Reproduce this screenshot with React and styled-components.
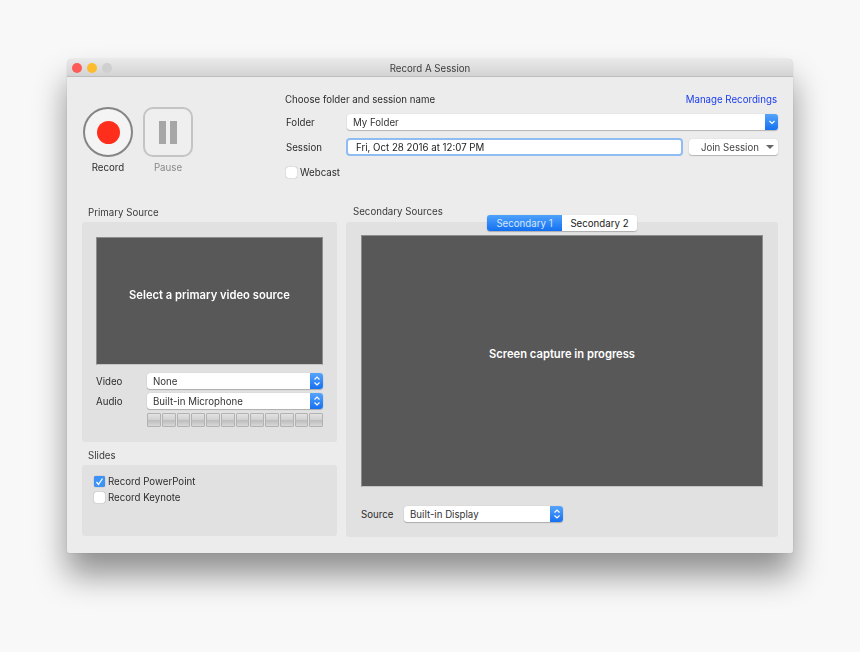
import React from 'react';
import styled, { createGlobalStyle } from 'styled-components';

const GlobalStyle = createGlobalStyle`
  html, body {
    margin: 0;
    padding: 0;
    background: #f8f8f8;
  }
  body {
    font-family: Inter, "Liberation Sans", sans-serif;
    font-size: 9.7px;
    color: #2c2c2c;
  }
  * { box-sizing: border-box; }
`;

const Page = styled.div`
  width: 860px;
  height: 652px;
  padding: 59px 67px;
  overflow: hidden;
`;

const Window = styled.div`
  width: 726px;
  height: 494px;
  background: #ececec;
  border-radius: 5px 5px 2px 2px;
  box-shadow: 0 0 1px rgba(0, 0, 0, 0.35), 0 22px 32px rgba(0, 0, 0, 0.42);
  display: flex;
  flex-direction: column;
  filter: blur(0.3px);
`;

const TitleBar = styled.div`
  height: 18px;
  padding-top: 2px;
  position: relative;
  flex: none;
  background: linear-gradient(#e9e9e9, #d3d3d3);
  border-bottom: 1px solid #bdbdbd;
  border-radius: 5px 5px 0 0;
  display: flex;
  align-items: center;
  justify-content: center;
  color: #3c3c3c;
`;

const Lights = styled.div`
  position: absolute;
  left: 5px;
  top: 4px;
  display: flex;
  gap: 5px;
`;

const Light = styled.span`
  width: 10px;
  height: 10px;
  border-radius: 50%;
  background: ${(p) => p.$color};
`;

const Body = styled.div`
  flex: 1;
  display: flex;
  flex-direction: column;
  padding: 0 15px 16px;
`;

const TopArea = styled.div`
  height: 125px;
  display: flex;
`;

const Transport = styled.div`
  width: 203px;
  padding: 30px 0 0 1px;
  display: flex;
  gap: 10px;
`;

const TransportItem = styled.div`
  width: 50px;
  display: flex;
  flex-direction: column;
  align-items: center;
  gap: 5px;
  color: ${(p) => (p.$disabled ? '#8a8a8a' : '#2c2c2c')};
`;

const RecordButton = styled.div`
  width: 50px;
  height: 50px;
  border-radius: 50%;
  border: 2px solid #858585;
  background: #f4f4f4;
  display: flex;
  align-items: center;
  justify-content: center;
`;

const RecordDot = styled.span`
  width: 23px;
  height: 23px;
  border-radius: 50%;
  background: #ff2d1c;
`;

const PauseButton = styled.div`
  width: 50px;
  height: 50px;
  border-radius: 10px;
  border: 2px solid #c4c4c4;
  background: #efefef;
  display: flex;
  align-items: center;
  justify-content: center;
  gap: 4px;
`;

const PauseBar = styled.span`
  width: 7px;
  height: 23px;
  background: #a6a6a6;
`;

const Form = styled.div`
  flex: 1;
  padding-top: 15px;
  display: flex;
  flex-direction: column;
`;

const FormHead = styled.div`
  height: 14px;
  margin-bottom: 8px;
  display: flex;
  justify-content: space-between;
  align-items: center;
`;

const ManageLink = styled.a`
  color: #1a3cf0;
  padding-right: 1px;
`;

const FormRow = styled.div`
  display: flex;
  align-items: center;
  height: 16px;
  margin-bottom: 9px;
`;

const RowLabel = styled.span`
  width: ${(p) => p.$width}px;
  flex: none;
  padding-left: ${(p) => p.$indent || 0}px;
`;

const SelectBox = styled.div`
  width: ${(p) => (p.$width ? `${p.$width}px` : 'auto')};
  flex: ${(p) => (p.$width ? 'none' : 1)};
  height: 16px;
  background: #fff;
  border-radius: 3px;
  box-shadow: 0 1px 1px rgba(0, 0, 0, 0.22), 0 0 1px rgba(0, 0, 0, 0.2);
  display: flex;
  justify-content: space-between;
  align-items: center;
  padding-left: 6px;
  overflow: hidden;
  color: #333;
`;

const SelectArrow = styled.span`
  width: 13px;
  height: 16px;
  background: linear-gradient(#56a5fc, #1670f0);
  display: flex;
  align-items: center;
  justify-content: center;
`;

const SessionInput = styled.div`
  width: 333px;
  height: 14px;
  flex: none;
  margin: 0 1px;
  background: #fff;
  border-radius: 2px;
  box-shadow: 0 0 0 2px #8fbdf3;
  display: flex;
  align-items: center;
  padding-left: 8px;
  color: #222;
`;

const JoinButton = styled.div`
  width: 89px;
  height: 16px;
  margin-left: 7px;
  flex: none;
  background: #fff;
  border-radius: 3px;
  box-shadow: 0 1px 1px rgba(0, 0, 0, 0.22), 0 0 1px rgba(0, 0, 0, 0.2);
  display: flex;
  align-items: center;
  justify-content: flex-end;
  gap: 7px;
  padding-right: 4px;
  color: #444;
`;

const Caret = styled.span`
  width: 0;
  height: 0;
  border-left: 4px solid transparent;
  border-right: 4px solid transparent;
  border-top: 4px solid #666;
`;

const CheckRow = styled.div`
  display: flex;
  align-items: center;
  gap: 3px;
  height: 12px;
  margin-left: ${(p) => p.$indent || 0}px;
  margin-top: ${(p) => p.$top || 0}px;
  margin-bottom: ${(p) => p.$gap || 0}px;
`;

const CheckBox = styled.span`
  width: 11px;
  height: 11px;
  border-radius: 2px;
  background: ${(p) => (p.$checked ? '#3d92f8' : '#fff')};
  box-shadow: 0 0 1px rgba(0, 0, 0, 0.5);
  display: flex;
  align-items: center;
  justify-content: center;
`;

const Sources = styled.div`
  flex: 1;
  display: grid;
  grid-template-columns: 255px 432px;
  gap: 9px;
`;

const Column = styled.div`
  display: flex;
  flex-direction: column;
`;

const SectionLabel = styled.div`
  height: 20px;
  padding-left: ${(p) => p.$indent || 6}px;
  padding-bottom: ${(p) => p.$lift || 0}px;
  display: flex;
  align-items: center;
  color: #3a3a3a;
`;

const Panel = styled.div`
  background: #e1e1e1;
  border-radius: 3px;
`;

const PrimaryPanel = styled(Panel)`
  height: 220px;
  padding: 15px 14px;
  margin-bottom: 3px;
`;

const SlidesPanel = styled(Panel)`
  height: 71px;
  padding: 10px 12px;
`;

const SecondaryPanel = styled(Panel)`
  height: 315px;
  position: relative;
  padding: 13px 15px 0;
`;

const Preview = styled.div`
  height: ${(p) => p.$height}px;
  padding-bottom: ${(p) => p.$lift}px;
  background: #585858;
  border: 1px solid #8d8d8d;
  border-bottom-color: #c4c4c4;
  display: flex;
  align-items: center;
  justify-content: center;
  color: #fff;
  font-size: 11.2px;
  font-weight: 600;
`;

const SourceRow = styled.div`
  display: flex;
  align-items: center;
  height: 16px;
  margin-top: ${(p) => p.$top}px;
`;

const Meter = styled.div`
  margin: 4px 0 0 51px;
  height: 14px;
  display: grid;
  grid-template-columns: repeat(12, 1fr);
  gap: 1px;
`;

const MeterCell = styled.span`
  background: linear-gradient(#e2e2e2 0%, #d2d2d2 45%, #bdbdbd 55%, #d8d8d8 100%);
  border: 1px solid #b2b2b2;
  border-radius: 1px;
`;

const Tabs = styled.div`
  position: absolute;
  top: -7px;
  left: 141px;
  width: 150px;
  height: 16px;
  display: flex;
  border-radius: 3px;
  overflow: hidden;
  box-shadow: 0 1px 1px rgba(0, 0, 0, 0.22), 0 0 1px rgba(0, 0, 0, 0.2);
`;

const Tab = styled.div`
  flex: ${(p) => (p.$active ? '0 0 75px' : 1)};
  display: flex;
  align-items: center;
  justify-content: center;
  background: ${(p) => (p.$active ? 'linear-gradient(#4ea2fb, #1470f1)' : '#fff')};
  color: ${(p) => (p.$active ? '#d5e7fd' : '#222')};
`;

const Chevrons = () => (
  <svg width="8" height="12" viewBox="0 0 8 12" fill="none" stroke="#fff" strokeWidth="1.2">
    <path d="M1.5 4.5 4 2l2.5 2.5M1.5 7.5 4 10l2.5-2.5" />
  </svg>
);

const ChevronDown = () => (
  <svg width="8" height="8" viewBox="0 0 8 8" fill="none" stroke="#fff" strokeWidth="1.2">
    <path d="M1.5 3 4 5.5 6.5 3" />
  </svg>
);

const Tick = () => (
  <svg width="9" height="9" viewBox="0 0 9 9" fill="none" stroke="#fff" strokeWidth="1.3">
    <path d="M1.5 5 3.5 7.5 7.5 1.5" />
  </svg>
);

const Select = ({ value, width, single }) => (
  <SelectBox $width={width}>
    {value}
    <SelectArrow>{single ? <ChevronDown /> : <Chevrons />}</SelectArrow>
  </SelectBox>
);

const App = () => (
  <Page>
    <GlobalStyle />
    <Window>
      <TitleBar>
        <Lights>
          <Light $color="#fc5b57" />
          <Light $color="#fdbc2e" />
          <Light $color="#cfcfcf" />
        </Lights>
        Record A Session
      </TitleBar>
      <Body>
        <TopArea>
          <Transport>
            <TransportItem>
              <RecordButton>
                <RecordDot />
              </RecordButton>
              Record
            </TransportItem>
            <TransportItem $disabled>
              <PauseButton>
                <PauseBar />
                <PauseBar />
              </PauseButton>
              Pause
            </TransportItem>
          </Transport>
          <Form>
            <FormHead>
              Choose folder and session name
              <ManageLink>Manage Recordings</ManageLink>
            </FormHead>
            <FormRow>
              <RowLabel $width={62} $indent={1}>Folder</RowLabel>
              <Select value="My Folder" single />
            </FormRow>
            <FormRow>
              <RowLabel $width={62} $indent={1}>Session</RowLabel>
              <SessionInput>Fri, Oct 28 2016 at 12:07 PM</SessionInput>
              <JoinButton>
                Join Session
                <Caret />
              </JoinButton>
            </FormRow>
            <CheckRow $indent={1} $top={2}>
              <CheckBox />
              Webcast
            </CheckRow>
          </Form>
        </TopArea>
        <Sources>
          <Column>
            <SectionLabel>Primary Source</SectionLabel>
            <PrimaryPanel>
              <Preview $height={128} $lift={13}>Select a primary video source</Preview>
              <SourceRow $top={8}>
                <RowLabel $width={51}>Video</RowLabel>
                <Select value="None" />
              </SourceRow>
              <SourceRow $top={4}>
                <RowLabel $width={51}>Audio</RowLabel>
                <Select value="Built-in Microphone" />
              </SourceRow>
              <Meter>
                {Array.from({ length: 12 }, (_, i) => (
                  <MeterCell key={i} />
                ))}
              </Meter>
            </PrimaryPanel>
            <SectionLabel>Slides</SectionLabel>
            <SlidesPanel>
              <CheckRow $gap={4}>
                <CheckBox $checked>
                  <Tick />
                </CheckBox>
                Record PowerPoint
              </CheckRow>
              <CheckRow>
                <CheckBox />
                Record Keynote
              </CheckRow>
            </SlidesPanel>
          </Column>
          <Column>
            <SectionLabel $indent={7} $lift={2}>Secondary Sources</SectionLabel>
            <SecondaryPanel>
              <Tabs>
                <Tab $active>Secondary 1</Tab>
                <Tab>Secondary 2</Tab>
              </Tabs>
              <Preview $height={252} $lift={15}>Screen capture in progress</Preview>
              <SourceRow $top={19}>
                <RowLabel $width={43}>Source</RowLabel>
                <Select value="Built-in Display" width={159} />
              </SourceRow>
            </SecondaryPanel>
          </Column>
        </Sources>
      </Body>
    </Window>
  </Page>
);

export default App;
